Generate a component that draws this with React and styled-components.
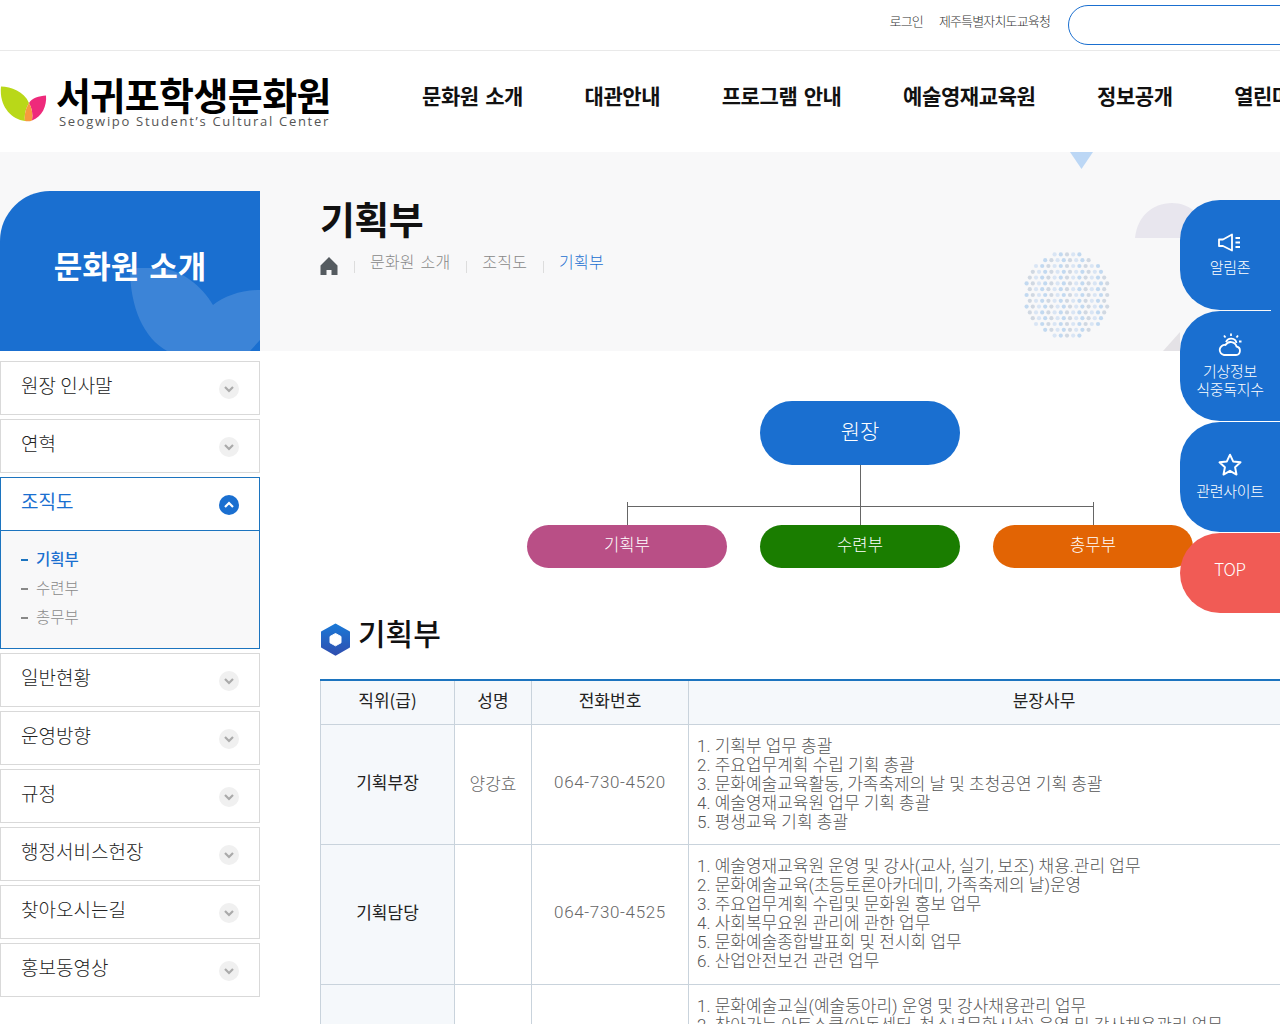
import React from 'react';
import styled, { createGlobalStyle } from 'styled-components';

const FONT = '"Noto Sans CJK KR", "Noto Sans", sans-serif';
const NUM_FONT = 'Roboto, "Noto Sans CJK KR", sans-serif';
const BLUE = '#1a6fd0';

const GlobalStyle = createGlobalStyle`
    html, body {
        margin: 0;
        padding: 0;
        height: 1024px;
        overflow: hidden;
        background: #fff;
    }
    body {
        font-family: ${FONT};
        color: #222;
    }
    * { box-sizing: border-box; }
    ul { list-style: none; margin: 0; padding: 0; }
`;

const Page = styled.div`
    position: relative;
    width: 1400px;
    height: 1024px;
    overflow: hidden;
`;

const TopBar = styled.div`
    height: 51px;
    border-bottom: 1px solid #e9e9e9;
    display: flex;
    justify-content: flex-end;
    align-items: center;
`;
const TopLink = styled.a`
    font-size: 13px;
    font-weight: 300;
    letter-spacing: -0.85px;
    color: #333;
    margin-right: 16px;
    padding-bottom: 9px;
    line-height: 1;
`;
const SearchBox = styled.div`
    width: 332px;
    height: 40px;
    margin-left: 2px;
    margin-top: -1px;
    border: 1px solid ${BLUE};
    border-radius: 20px;
    background: #fff;
`;

const Header = styled.header`
    height: 101px;
    display: flex;
    align-items: center;
    background: #fff;
`;
const Logo = styled.div`
    width: 422px;
    display: flex;
    align-items: center;
`;
const LogoText = styled.div`
    margin-left: 9px;
    margin-bottom: 2px;
    display: flex;
    flex-direction: column;
`;
const LogoTitle = styled.div`
    font-size: 38px;
    font-weight: 700;
    line-height: 40px;
    color: #000;
    letter-spacing: -0.6px;
    white-space: nowrap;
`;
const LogoSub = styled.div`
    font-family: "Open Sans", sans-serif;
    font-size: 13px;
    line-height: 14px;
    margin-left: 3px;
    letter-spacing: 1.7px;
    color: #555;
    white-space: nowrap;
`;
const Nav = styled.nav`
    display: flex;
    gap: 61.5px;
    padding-bottom: 14px;
`;
const NavItem = styled.a`
    font-size: 21px;
    font-weight: 700;
    color: #111;
    letter-spacing: -0.4px;
    word-spacing: 2px;
    white-space: nowrap;
`;

const Band = styled.section`
    position: relative;
    height: 199px;
    background: #f8f8f9;
    display: flex;
    align-items: flex-end;
`;
const SideTitle = styled.div`
    position: relative;
    width: 260px;
    height: 160px;
    background: ${BLUE};
    border-top-left-radius: 50px;
    overflow: hidden;
    display: flex;
    justify-content: center;
    padding-top: 52px;
    color: #fff;
    font-size: 31px;
    font-weight: 700;
    line-height: 44px;
    word-spacing: 3px;
`;
const TitleLeaf = styled.svg`
    position: absolute;
    left: 130px;
    top: 77px;
`;
const TitleLabel = styled.span`
    position: relative;
`;
const PageHead = styled.div`
    align-self: flex-start;
    margin-left: 60px;
    padding-top: 39px;
`;
const PageTitle = styled.h1`
    margin: 0;
    font-size: 38px;
    font-weight: 700;
    line-height: 54px;
    letter-spacing: -0.6px;
    color: #111;
`;
const Crumbs = styled.div`
    display: flex;
    align-items: flex-start;
    margin-top: 4px;
`;
const Crumb = styled.span`
    font-size: 16px;
    font-weight: 300;
    line-height: 24px;
    letter-spacing: 0.2px;
    word-spacing: 2px;
    color: ${p => (p.$current ? BLUE : '#888')};
    &:not(:first-child)::before {
        content: '';
        display: inline-block;
        width: 1px;
        height: 12px;
        background: #ddd;
        margin: 0 15px 0 16px;
        vertical-align: -5px;
    }
`;
const HomeGlyph = styled.svg`
    vertical-align: -8px;
`;
const Deco = styled.svg`
    position: absolute;
    left: 1000px;
    top: 0;
`;

const Body = styled.div`
    display: flex;
    padding-top: 10px;
`;
const SideNav = styled.aside`
    width: 260px;
    flex: none;
    display: flex;
    flex-direction: column;
    gap: 4px;
`;
const MenuItem = styled.div`
    border: 1px solid ${p => (p.$open ? '#1c74bf' : '#d9d9d9')};
`;
const MenuHead = styled.div`
    height: ${p => (p.$open ? 53 : 52)}px;
    display: flex;
    align-items: center;
    justify-content: space-between;
    padding: 0 20px 7px;
    font-size: 19px;
    font-weight: ${p => (p.$open ? 400 : 300)};
    color: ${p => (p.$open ? BLUE : '#222')};
    border-bottom: ${p => (p.$open ? '1px solid #1c74bf' : '0')};
`;
const Arrow = styled.span`
    width: 20px;
    height: 20px;
    border-radius: 50%;
    margin-top: 9px;
    background: ${p => (p.$open ? BLUE : '#f0f0f0')};
    color: ${p => (p.$open ? '#fff' : '#aaa')};
    display: flex;
    align-items: center;
    justify-content: center;
`;
const SubList = styled.ul`
    background: #f8f8f9;
    padding: 12px 20px 16px;
    height: 117px;
`;
const SubItem = styled.li`
    height: 29px;
    display: flex;
    align-items: center;
    font-size: 15.5px;
    font-weight: ${p => (p.$active ? 500 : 300)};
    color: ${p => (p.$active ? BLUE : '#8a8a8a')};
    &::before {
        content: '';
        width: 7px;
        height: 2px;
        margin-right: 8px;
        margin-top: 5px;
        background: ${p => (p.$active ? '#1c74bf' : '#888')};
    }
`;

const Content = styled.main`
    width: 1080px;
    margin-left: 60px;
    padding-top: 40px;
`;
const Chart = styled.div`
    display: flex;
    flex-direction: column;
    align-items: center;
`;
const ChiefBox = styled.div`
    width: 200px;
    height: 64px;
    border-radius: 32px;
    background: ${BLUE};
    color: #fff;
    font-size: 21px;
    font-weight: 300;
    display: flex;
    align-items: center;
    justify-content: center;
    padding-bottom: 6px;
`;
const Stem = styled.div`
    width: 1px;
    height: 41px;
    background: #666;
`;
const Branches = styled.div`
    position: relative;
    display: flex;
    gap: 33px;
    padding-top: 19px;
    &::before {
        content: '';
        position: absolute;
        top: 0;
        left: 100px;
        right: 100px;
        height: 1px;
        background: #666;
    }
`;
const DeptBox = styled.div`
    position: relative;
    width: 200px;
    height: 43px;
    border-radius: 22px;
    background: ${p => p.$color};
    color: #fff;
    font-size: 16.6px;
    font-weight: 300;
    display: flex;
    align-items: center;
    justify-content: center;
    padding-bottom: 5px;
    &::before {
        content: '';
        position: absolute;
        top: -23px;
        left: 100px;
        width: 1px;
        height: 23px;
        background: #666;
    }
`;

const SectionTitle = styled.h2`
    margin: 41px 0 0;
    height: 70px;
    display: flex;
    align-items: flex-start;
    gap: 7px;
    font-size: 30px;
    font-weight: 500;
    line-height: 46px;
    color: #111;
`;
const HexIcon = styled.svg`
    margin-top: 14px;
`;

const Table = styled.table`
    width: 100%;
    table-layout: fixed;
    border-collapse: collapse;
    border-top: 2px solid #1c74bf;
`;
const Th = styled.th`
    height: 44px;
    font-size: 17px;
    font-weight: 400;
    color: #222;
    background: #f5f8fb;
    border: 1px solid #c9d3dc;
    padding: 0 0 5px;
`;
const RowHead = styled.td`
    font-size: 17px;
    font-weight: 400;
    text-align: center;
    color: #222;
    background: #f5f8fb;
    border: 1px solid #c9d3dc;
    padding: 0 0 6px;
    height: ${p => p.$height}px;
`;
const Cell = styled.td`
    font-family: ${NUM_FONT};
    font-size: 17px;
    font-weight: 300;
    text-align: center;
    color: #666;
    letter-spacing: ${p => (p.$tel ? '0.65px' : '0')};
    border: 1px solid #c9d3dc;
    padding: 0 0 4px;
`;
const DutyCell = styled.td`
    font-family: ${NUM_FONT};
    font-size: 17px;
    font-weight: 300;
    line-height: 19px;
    color: #555;
    border: 1px solid #c9d3dc;
    padding: 12px 8px 8px;
    vertical-align: top;
`;
const DutyLine = styled.div`
    white-space: nowrap;
`;

const QuickMenu = styled.div`
    position: absolute;
    left: 1180px;
    top: 200px;
    width: 100px;
    display: flex;
    flex-direction: column;
    gap: 1px;
`;
const QuickButton = styled.a`
    position: relative;
    height: ${p => p.$height}px;
    background: ${p => p.$color || BLUE};
    border-radius: 40px 0 0 40px;
    color: #fff;
    font-size: ${p => p.$font || 15}px;
    font-weight: 300;
    line-height: 18px;
    display: flex;
    flex-direction: column;
    align-items: center;
    justify-content: center;
    text-align: center;
    letter-spacing: -0.3px;
    padding-bottom: ${p => p.$pad || 2}px;
    & svg { margin-bottom: 4px; }
    &:first-child::after {
        content: '';
        position: absolute;
        right: 0;
        bottom: -1px;
        width: 9px;
        height: 1px;
        background: ${BLUE};
    }
`;

const Chevron = ({ up }) => (
    <svg width="10" height="8" viewBox="0 0 10 8" fill="none" stroke="currentColor" strokeWidth="2.2">
        <path d={up ? 'M1 6l4-4 4 4' : 'M1 2l4 4 4-4'} />
    </svg>
);

const LeafLogo = () => (
    <svg width="47" height="40" viewBox="0 0 47 40">
        <path d="M1 4.5C11 5 24 9 29 21 26 26 24 32 25 39 11 37 -1 24 1 4.5Z" fill="#b9d818" />
        <path d="M29 21C32 16 39 14 46 13.5 47 24 42 35 32 38.5 33 32 32 26 29 21Z" fill="#ee2a7b" />
        <path d="M29 21C26 26 24 32 25 39 27 39.5 30 39.5 32 38.5 33 32 32 26 29 21Z" fill="#f79a3e" />
    </svg>
);

const HomeIcon = () => (
    <HomeGlyph width="18" height="20" viewBox="0 0 18 20" fill="#555b60">
        <path d="M9 1L0.5 9.5V19H6.5V14H11.5V19H17.5V9.5Z" />
    </HomeGlyph>
);

const BG_DOTS = [];
for (let row = 0; row < 15; row++) {
    for (let col = 0; col < 15; col++) {
        const x = 67 + (col - 7) * 6.2 + (row % 2) * 3;
        const y = 143 + (row - 7) * 5.8;
        if (Math.hypot(x - 67, y - 143) < 43) {
            BG_DOTS.push([x, y, (row * 3 + col) % 3]);
        }
    }
}

const Decorations = () => (
    <Deco width="200" height="199" viewBox="0 0 200 199">
        <path d="M70 0H93L81.5 17Z" fill="#bcd7f5" />
        <path d="M135 86C137 65 152 51 172 51 180 51 190 54 198 62V86Z" fill="#e8e6ee" />
        <path d="M163 199L180 180V199Z" fill="#e4e2e6" />
        {BG_DOTS.map(([x, y, tone], i) => (
            <circle key={i} cx={x} cy={y} r="2.1" fillOpacity="0.85" fill={tone === 0 ? '#b9d3ef' : tone === 1 ? '#c9d2de' : '#d3e2f3'} />
        ))}
    </Deco>
);

const menus = ['원장 인사말', '연혁'];
const menusAfter = ['일반현황', '운영방향', '규정', '행정서비스헌장', '찾아오시는길', '홍보동영상'];
const navItems = ['문화원 소개', '대관안내', '프로그램 안내', '예술영재교육원', '정보공개', '열린마당'];

const rows = [
    {
        head: '기획부장',
        name: '양강효',
        tel: '064-730-4520',
        height: 120,
        duties: [
            '1. 기획부 업무 총괄',
            '2. 주요업무계획 수립 기획 총괄',
            '3. 문화예술교육활동, 가족축제의 날 및 초청공연 기획 총괄',
            '4. 예술영재교육원 업무 기획 총괄',
            '5. 평생교육 기획 총괄',
        ],
    },
    {
        head: '기획담당',
        name: '',
        tel: '064-730-4525',
        height: 140,
        duties: [
            '1. 예술영재교육원 운영 및 강사(교사, 실기, 보조) 채용.관리 업무',
            '2. 문화예술교육(초등토론아카데미, 가족축제의 날)운영',
            '3. 주요업무계획 수립및 문화원 홍보 업무',
            '4. 사회복무요원 관리에 관한 업무',
            '5. 문화예술종합발표회 및 전시회 업무',
            '6. 산업안전보건 관련 업무',
        ],
    },
    {
        head: '',
        name: '',
        tel: '',
        height: 140,
        duties: [
            '1. 문화예술교실(예술동아리) 운영 및 강사채용관리 업무',
            '2. 찾아가는 아트스쿨(아동센터, 청소년문화시설) 운영 및 강사채용관리 업무',
        ],
    },
];

export default function App() {
    return (
        <Page>
            <GlobalStyle />
            <TopBar>
                <TopLink>로그인</TopLink>
                <TopLink>제주특별자치도교육청</TopLink>
                <SearchBox />
            </TopBar>
            <Header>
                <Logo>
                    <LeafLogo />
                    <LogoText>
                        <LogoTitle>서귀포학생문화원</LogoTitle>
                        <LogoSub>Seogwipo Student’s Cultural Center</LogoSub>
                    </LogoText>
                </Logo>
                <Nav>
                    {navItems.map(item => <NavItem key={item}>{item}</NavItem>)}
                </Nav>
            </Header>
            <Band>
                <Decorations />
                <SideTitle>
                    <TitleLeaf width="130" height="83" viewBox="0 0 130 83">
                        <path d="M0 0H30C52 2 72 18 83 37 94 28 112 22 130 22V72L120 83H37C14 70 0 40 0 0Z" fill="#fff" fillOpacity="0.15" />
                    </TitleLeaf>
                    <TitleLabel>문화원 소개</TitleLabel>
                </SideTitle>
                <PageHead>
                    <PageTitle>기획부</PageTitle>
                    <Crumbs>
                        <Crumb><HomeIcon /></Crumb>
                        <Crumb>문화원 소개</Crumb>
                        <Crumb>조직도</Crumb>
                        <Crumb $current>기획부</Crumb>
                    </Crumbs>
                </PageHead>
            </Band>
            <Body>
                <SideNav>
                    {menus.map(m => (
                        <MenuItem key={m}>
                            <MenuHead>{m}<Arrow><Chevron /></Arrow></MenuHead>
                        </MenuItem>
                    ))}
                    <MenuItem $open>
                        <MenuHead $open>조직도<Arrow $open><Chevron up /></Arrow></MenuHead>
                        <SubList>
                            <SubItem $active>기획부</SubItem>
                            <SubItem>수련부</SubItem>
                            <SubItem>총무부</SubItem>
                        </SubList>
                    </MenuItem>
                    {menusAfter.map(m => (
                        <MenuItem key={m}>
                            <MenuHead>{m}<Arrow><Chevron /></Arrow></MenuHead>
                        </MenuItem>
                    ))}
                </SideNav>
                <Content>
                    <Chart>
                        <ChiefBox>원장</ChiefBox>
                        <Stem />
                        <Branches>
                            <DeptBox $color="#b94f86">기획부</DeptBox>
                            <DeptBox $color="#1a7d00">수련부</DeptBox>
                            <DeptBox $color="#e26404">총무부</DeptBox>
                        </Branches>
                    </Chart>
                    <SectionTitle>
                        <HexIcon width="31" height="33" viewBox="0 0 31 33">
                            <defs>
                                <linearGradient id="hex" x1="0" y1="0" x2="0" y2="1">
                                    <stop offset="0" stopColor="#1a78d6" />
                                    <stop offset="1" stopColor="#2f4fb0" />
                                </linearGradient>
                            </defs>
                            <path d="M15.5 1.5L29 9.2V24L15.5 31.7L2 24V9.2Z" fill="url(#hex)" stroke="url(#hex)" strokeWidth="2" strokeLinejoin="round" />
                            <path d="M15.5 10.5L21 13.5V19.8L15.5 22.8L10 19.8V13.5Z" fill="#fff" stroke="#fff" strokeLinejoin="round" />
                        </HexIcon>
                        기획부
                    </SectionTitle>
                    <Table>
                        <colgroup>
                            <col style={{ width: 134 }} />
                            <col style={{ width: 77 }} />
                            <col style={{ width: 157 }} />
                            <col />
                        </colgroup>
                        <thead>
                            <tr>
                                <Th>직위(급)</Th>
                                <Th>성명</Th>
                                <Th>전화번호</Th>
                                <Th>분장사무</Th>
                            </tr>
                        </thead>
                        <tbody>
                            {rows.map((r, i) => (
                                <tr key={i}>
                                    <RowHead $height={r.height}>{r.head}</RowHead>
                                    <Cell>{r.name}</Cell>
                                    <Cell $tel>{r.tel}</Cell>
                                    <DutyCell>
                                        {r.duties.map(d => <DutyLine key={d}>{d}</DutyLine>)}
                                    </DutyCell>
                                </tr>
                            ))}
                        </tbody>
                    </Table>
                </Content>
            </Body>
            <QuickMenu>
                <QuickButton $height={110}>
                    <svg width="26" height="22" viewBox="0 0 26 22" fill="none" stroke="#fff" strokeWidth="1.8">
                        <path d="M2 7.5H6L15 2.5V18.5L6 14H2Z" strokeLinejoin="round" />
                        <path d="M18.5 6H23M18.5 10.5H23M18.5 15H23" />
                    </svg>
                    알림존
                </QuickButton>
                <QuickButton $height={110}>
                    <svg width="26" height="26" viewBox="0 0 26 26" fill="none" stroke="#fff" strokeWidth="1.8">
                        <path d="M7 23H19A4.3 4.3 0 0 0 19.5 14.5 6 6 0 0 0 8.5 13 5 5 0 0 0 7 23Z" strokeLinejoin="round" />
                        <path d="M9 10A5.5 5.5 0 0 1 19.5 11M14 1.5V4M7 3.5L8.5 5.5M21 3.5L19.5 5.5M24.5 9.5H22" />
                    </svg>
                    기상정보<br />식중독지수
                </QuickButton>
                <QuickButton $height={110}>
                    <svg width="26" height="26" viewBox="0 0 24 24" fill="none" stroke="#fff" strokeWidth="1.8" strokeLinejoin="round">
                        <path d="M12 2.5l2.9 6.2 6.8.8-5 4.6 1.3 6.7-6-3.4-6 3.4 1.3-6.7-5-4.6 6.8-.8z" />
                    </svg>
                    관련사이트
                </QuickButton>
                <QuickButton $height={80} $color="#f15b55" $font={17} $pad={8}>TOP</QuickButton>
            </QuickMenu>
        </Page>
    );
}
